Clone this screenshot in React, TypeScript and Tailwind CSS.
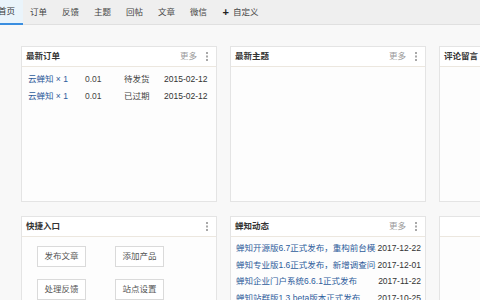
import React from "react";

const tabs = ["首页", "订单", "反馈", "主题", "回帖", "文章", "微信"];

const orders = [
  { name: "云蝉知 × 1", price: "0.01", status: "待发货", date: "2015-02-12" },
  { name: "云蝉知 × 1", price: "0.01", status: "已过期", date: "2015-02-12" },
];

const news = [
  { title: "蝉知开源版6.7正式发布，重构前台模板和后台界面", date: "2017-12-22" },
  { title: "蝉知专业版1.6正式发布，新增调查问卷功能", date: "2017-12-01" },
  { title: "蝉知企业门户系统6.6.1正式发布", date: "2017-11-22" },
  { title: "蝉知站群版1.3.beta版本正式发布", date: "2017-10-25" },
];

const shortcuts = ["发布文章", "添加产品", "处理反馈", "站点设置"];

function Dots() {
  return (
    <svg width="2" height="9" viewBox="0 0 2 9" className="shrink-0">
      <rect x="0" y="0" width="2" height="2" fill="#a8a8a8" />
      <rect x="0" y="3.5" width="2" height="2" fill="#a8a8a8" />
      <rect x="0" y="7" width="2" height="2" fill="#a8a8a8" />
    </svg>
  );
}

function Panel({
  title,
  more = true,
  dots = true,
  className = "",
  children,
}: {
  title: string;
  more?: boolean;
  dots?: boolean;
  className?: string;
  children?: React.ReactNode;
}) {
  return (
    <div
      className={`w-[196px] shrink-0 border border-[#e4e4e4] bg-[#fdfdfd] flex flex-col ${className}`}
    >
      <div className="h-[20px] shrink-0 flex items-center pl-[4px] pr-[8px] border-b border-[#ece7df] bg-white">
        <span className="font-bold text-[#333] whitespace-nowrap">{title}</span>
        <div className="ml-auto flex items-center gap-[9px]">
          {more && <span className="text-[#9a9a9a]">更多</span>}
          {dots && <Dots />}
        </div>
      </div>
      <div className="flex-1">{children}</div>
    </div>
  );
}

export default function App() {
  return (
    <div className="w-[480px] h-[300px] overflow-hidden bg-[#f8f8f8] text-[8.5px] leading-none font-['Liberation_Sans','Noto_Sans_CJK_SC',sans-serif]">
      <div className="h-[25px] bg-[#efefef] border-b border-[#e0e0e0] flex items-stretch ml-[-9.5px]">
        {tabs.map((t, i) => (
          <div
            key={t}
            className={
              i === 0
                ? "px-[7.5px] flex items-center bg-[#eaf4fb] border-b-2 border-[#3a8ee0] text-[#333] mb-[-1px]"
                : "px-[7.5px] flex items-center text-[#444]"
            }
          >
            {t}
          </div>
        ))}
        <div className="pl-[8px] flex items-center gap-[4px] text-[#444]">
          <span className="font-bold text-[11px] text-[#222]">+</span>
          <span>自定义</span>
        </div>
      </div>

      <div className="pl-[21px] pt-[21px] flex flex-col gap-[14px]">
        <div className="flex gap-[13px]">
          <Panel title="最新订单" className="h-[156px]">
            <div className="pt-[4px] pl-[6px]">
              {orders.map((o, i) => (
                <div key={i} className="h-[17px] flex items-center">
                  <span className="w-[57px] text-[#2d5c9b] whitespace-nowrap">{o.name}</span>
                  <span className="w-[39px] text-[#444]">{o.price}</span>
                  <span className="w-[40px] text-[#444]">{o.status}</span>
                  <span className="text-[#333]">{o.date}</span>
                </div>
              ))}
            </div>
          </Panel>
          <Panel title="最新主题" className="h-[156px]" />
          <Panel title="评论留言" more={false} dots={false} className="h-[156px]" />
        </div>

        <div className="flex gap-[13px]">
          <Panel title="快捷入口" more={false} className="h-[120px]">
            <div className="grid grid-cols-[49px_49px] gap-x-[29px] gap-y-[12px] pt-[9px] pl-[15px]">
              {shortcuts.map((s) => (
                <div
                  key={s}
                  className="h-[21px] border border-[#dadada] bg-white flex items-center justify-center text-[#555]"
                >
                  {s}
                </div>
              ))}
            </div>
          </Panel>
          <Panel title="蝉知动态" className="h-[120px]">
            <div className="pt-[3px] pl-[5px] pr-[4px]">
              {news.map((n) => (
                <div key={n.date} className="h-[16.5px] flex items-center">
                  <span className="flex-1 overflow-hidden whitespace-nowrap text-[#2d5c9b]">
                    {n.title}
                  </span>
                  <span className="shrink-0 pl-[2px] text-[#333]">{n.date}</span>
                </div>
              ))}
            </div>
          </Panel>
          <Panel title="" more={false} dots={false} className="h-[120px]" />
        </div>
      </div>
    </div>
  );
}
